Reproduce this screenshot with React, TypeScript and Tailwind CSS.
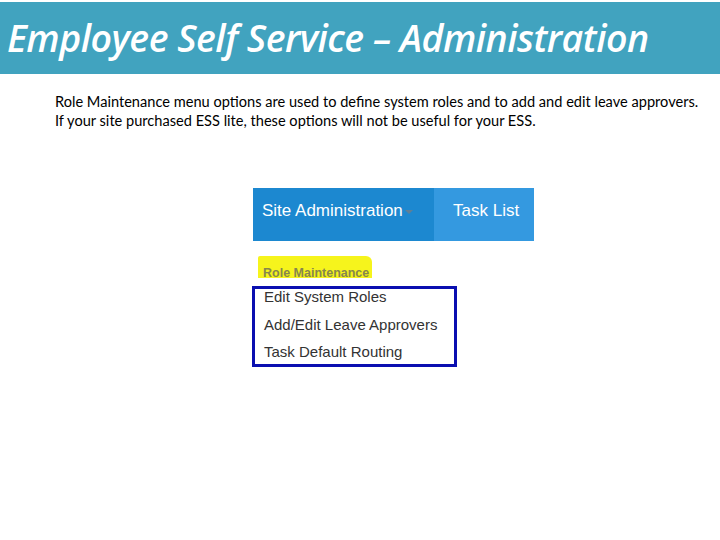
export default function App() {
  return (
    <div className="w-[720px] h-[540px] bg-white relative overflow-hidden">
      <div className="pt-[2px]">
        <div className="h-[72px] bg-[#41a3bf] flex items-center pl-[7px]">
          <h1 className="text-white italic font-semibold text-[37.5px] tracking-[-0.5px] font-['Open_Sans',sans-serif] leading-none">
            Employee Self Service – Administration
          </h1>
        </div>
      </div>

      <div className="pl-[55px] pt-[18px] text-[14.6px] leading-[19px] text-black font-['Lato',sans-serif]">
        <p>Role Maintenance menu options are used to define system roles and to add and edit leave approvers.</p>
        <p>If your site purchased ESS lite, these options will not be useful for your ESS.</p>
      </div>

      <div className="ml-[253px] mt-[58px] w-[281px] font-['Liberation_Sans',Arial,sans-serif]">
        <div className="flex h-[53px] text-white text-[17px] leading-[20px]">
          <div className="w-[181px] bg-[#1c88d0] flex items-center pb-[8px] pl-[9px]">
            <span>Site Administration</span>
            <span className="ml-[2px] mt-[2px] w-0 h-0 border-l-[4px] border-r-[4px] border-t-[4px] border-l-transparent border-r-transparent border-t-[#5f7f96]" />
          </div>
          <div className="flex-1 bg-[#3499e0] flex items-center pb-[8px] pl-[19px]">Task List</div>
        </div>

        <div className="mt-[15px] ml-[5px] w-[114px] h-[22px] bg-[#f6f41c] rounded-tr-[6px] rounded-tl-[2px] pt-[10px] pl-[5px]">
          <span className="block text-[12.5px] font-bold text-[#86864e] leading-[14px] whitespace-nowrap">Role Maintenance</span>
        </div>

        <div className="mt-[8px] -ml-[1px] w-[205px] h-[81px] border-[3px] border-[#0a0fb0] pl-[9px] flex flex-col gap-[11.5px] text-[15px] text-[#333] leading-[16px]">
          <div>Edit System Roles</div>
          <div>Add/Edit Leave Approvers</div>
          <div>Task Default Routing</div>
        </div>
      </div>
    </div>
  );
}
